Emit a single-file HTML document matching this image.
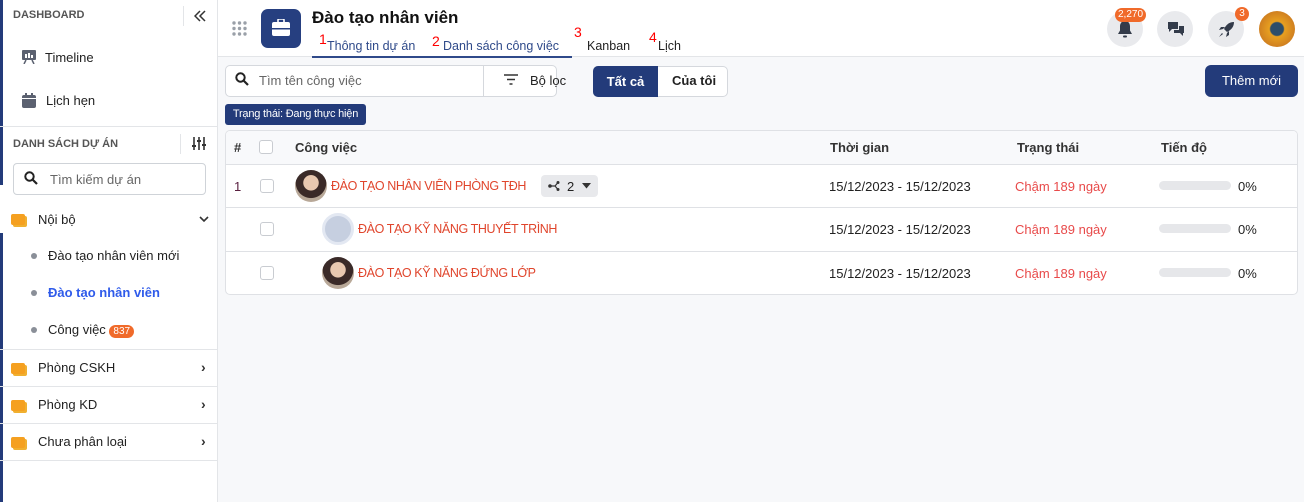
<!DOCTYPE html>
<html><head><meta charset="utf-8"><style>
*{box-sizing:border-box;margin:0;padding:0}
body{width:1304px;height:502px;overflow:hidden;font-family:"Liberation Sans","Noto Sans CJK SC",sans-serif;font-size:13px;color:#222;background:#f7f8fa;position:relative}
.abs{position:absolute}
.side{left:0;top:0;width:218px;height:502px;background:#fff;border-right:1px solid #e3e5e8}
.bar{left:0;width:3px;background:#233b7a}
.hdr{left:218px;top:0;width:1086px;height:57px;background:#fff;border-bottom:1px solid #e3e5e8}
.sec{font-size:11px;font-weight:bold;color:#555}
.item{font-size:13px;color:#222}
.hl{height:1px;background:#e3e5e8;left:0;width:217px}
.fold{width:14px;height:11px;background:#f5a020;border-radius:2px;box-shadow:2px 2px 0 #f0b030}
.dot{width:6px;height:6px;border-radius:50%;background:#8a8f98}
.chev{font-size:14px;color:#333;font-weight:bold}
.circ{width:36px;height:36px;border-radius:50%;background:#e9eaed}
.badge{background:#f06a2a;color:#fff;border-radius:8px;font-size:10px;padding:1px 4px;line-height:12px}
.th{font-weight:bold;color:#333;font-size:13px}
.task{color:#e0452c;font-size:12.5px;letter-spacing:-0.4px}
.red{color:#e84a4a}
.prog{width:72px;height:9px;border-radius:5px;background:#e6e7ea}
.cb{width:14px;height:14px;border:1px solid #c9ccd1;border-radius:3px;background:#fff}
.av{width:32px;height:32px;border-radius:50%;background:radial-gradient(circle at 50% 40%,#e8c8b0 0 30%,#3a2a28 32% 60%,#b8a898 62%)}
.tab{font-size:12.5px}
</style></head><body>
<div class="abs side"></div>
<div class="abs bar" style="top:0;height:185px"></div>
<div class="abs bar" style="top:233px;height:269px"></div>
<div class="abs sec" style="left:13px;top:9px">DASHBOARD</div>
<div class="abs" style="left:183px;top:6px;width:1px;height:20px;background:#e3e5e8"></div>
<svg class="abs" style="left:194px;top:10px" width="12" height="12" viewBox="0 0 12 12"><path d="M6 1L1 6l5 5M11 1L6 6l5 5" fill="none" stroke="#333" stroke-width="1.5"/></svg>
<svg class="abs" style="left:22px;top:50px" width="14" height="14" viewBox="0 0 14 14"><rect x="0" y="0" width="14" height="10" rx="1" fill="#5b6170"/><rect x="3" y="4" width="2" height="4" fill="#fff"/><rect x="6" y="3" width="2" height="5" fill="#fff"/><rect x="9" y="5" width="2" height="3" fill="#fff"/><path d="M4 10l-2 4M10 10l2 4" stroke="#5b6170" stroke-width="1.5"/></svg>
<div class="abs item" style="left:45px;top:50px">Timeline</div>
<svg class="abs" style="left:22px;top:93px" width="14" height="15" viewBox="0 0 14 15"><rect x="0" y="2" width="14" height="13" rx="2" fill="#5b6170"/><rect x="3" y="0" width="2" height="3" fill="#5b6170"/><rect x="9" y="0" width="2" height="3" fill="#5b6170"/><rect x="0" y="5" width="14" height="1" fill="#fff"/></svg>
<div class="abs item" style="left:46px;top:93px">Lịch hẹn</div>
<div class="abs hl" style="top:126px"></div>
<div class="abs sec" style="left:13px;top:138px">DANH SÁCH DỰ ÁN</div>
<div class="abs" style="left:180px;top:134px;width:1px;height:20px;background:#e3e5e8"></div>
<svg class="abs" style="left:192px;top:137px" width="14" height="13" viewBox="0 0 14 13"><path d="M2 0v13M7 0v13M12 0v13" stroke="#333" stroke-width="1.6"/><path d="M0 9h4M5 4h4M10 8h4" stroke="#333" stroke-width="2"/></svg>
<div class="abs" style="left:13px;top:163px;width:193px;height:32px;border:1px solid #cfd3d8;border-radius:4px;background:#fff"></div>
<svg class="abs" style="left:24px;top:171px" width="14" height="14" viewBox="0 0 14 14"><circle cx="5.5" cy="5.5" r="4.2" fill="none" stroke="#222" stroke-width="2"/><path d="M8.5 8.5l4.5 4.5" stroke="#222" stroke-width="2.2"/></svg>
<div class="abs" style="left:50px;top:172px;color:#666">Tìm kiếm dự án</div>
<div class="abs fold" style="left:11px;top:214px"></div>
<div class="abs item" style="left:38px;top:212px">Nội bộ</div>
<svg class="abs" style="left:199px;top:216px" width="10" height="7"><path d="M1 1l4 4 4-4" fill="none" stroke="#333" stroke-width="1.6"/></svg>
<div class="abs dot" style="left:31px;top:253px"></div>
<div class="abs item" style="left:48px;top:248px">Đào tạo nhân viên mới</div>
<div class="abs dot" style="left:31px;top:290px"></div>
<div class="abs item" style="left:48px;top:285px;color:#2f5bea;font-weight:bold">Đào tạo nhân viên</div>
<div class="abs dot" style="left:31px;top:327px"></div>
<div class="abs item" style="left:48px;top:322px">Công việc <span class="badge">837</span></div>
<div class="abs hl" style="top:349px"></div>
<div class="abs fold" style="left:11px;top:363px"></div>
<div class="abs item" style="left:38px;top:360px">Phòng CSKH</div>
<div class="abs chev" style="left:201px;top:359px">›</div>
<div class="abs hl" style="top:386px"></div>
<div class="abs fold" style="left:11px;top:400px"></div>
<div class="abs item" style="left:38px;top:397px">Phòng KD</div>
<div class="abs chev" style="left:201px;top:396px">›</div>
<div class="abs hl" style="top:423px"></div>
<div class="abs fold" style="left:11px;top:437px"></div>
<div class="abs item" style="left:38px;top:434px">Chưa phân loại</div>
<div class="abs chev" style="left:201px;top:433px">›</div>
<div class="abs hl" style="top:460px"></div>

<div class="abs hdr"></div>
<svg class="abs" style="left:232px;top:21px" width="15" height="15"><g fill="#9aa0a8"><circle cx="2" cy="2" r="1.7"/><circle cx="7.5" cy="2" r="1.7"/><circle cx="13" cy="2" r="1.7"/><circle cx="2" cy="7.5" r="1.7"/><circle cx="7.5" cy="7.5" r="1.7"/><circle cx="13" cy="7.5" r="1.7"/><circle cx="2" cy="13" r="1.7"/><circle cx="7.5" cy="13" r="1.7"/><circle cx="13" cy="13" r="1.7"/></g></svg>
<div class="abs" style="left:261px;top:9px;width:40px;height:39px;border-radius:7px;background:#263f80"></div>
<svg class="abs" style="left:272px;top:19px" width="18" height="17" viewBox="0 0 18 17"><rect x="6" y="0" width="6" height="4" rx="1" fill="none" stroke="#fff" stroke-width="1.6"/><rect x="0" y="3" width="18" height="14" rx="2" fill="#fff"/><rect x="0" y="9" width="18" height="1.5" fill="#263f80"/></svg>
<div class="abs" style="left:312px;top:8px;font-size:17px;font-weight:bold;color:#111">Đào tạo nhân viên</div>
<div class="abs" style="left:319px;top:31px;color:#f00;font-size:14px">1</div>
<div class="abs tab" style="left:327px;top:39px;color:#2f4a8a">Thông tin dự án</div>
<div class="abs" style="left:432px;top:33px;color:#f00;font-size:14px">2</div>
<div class="abs tab" style="left:443px;top:39px;color:#2f4a8a">Danh sách công việc</div>
<div class="abs" style="left:312px;top:56px;width:260px;height:1.5px;background:#2f4a8a"></div>
<div class="abs" style="left:574px;top:24px;color:#f00;font-size:14px">3</div>
<div class="abs tab" style="left:587px;top:39px">Kanban</div>
<div class="abs" style="left:649px;top:29px;color:#f00;font-size:14px">4</div>
<div class="abs tab" style="left:658px;top:39px">Lịch</div>

<div class="abs circ" style="left:1107px;top:11px"></div>
<svg class="abs" style="left:1117px;top:20px" width="16" height="19" viewBox="0 0 16 19"><path d="M8 1c-3.5 0-5 2.5-5 5.5v4L1 14h14l-2-3.5v-4C13 3.5 11.5 1 8 1z" fill="#333b4a"/><rect x="6" y="15.5" width="4" height="2" rx="1" fill="#333b4a"/></svg>
<div class="abs badge" style="left:1115px;top:8px;font-size:10px;padding:1px 3px">2,270</div>
<div class="abs circ" style="left:1157px;top:11px"></div>
<svg class="abs" style="left:1167px;top:21px" width="18" height="17" viewBox="0 0 18 17"><path d="M1 1h10v7H5l-3 3V8H1z" fill="#333b4a"/><path d="M12 5h5v7h-1v3l-3-3H7V9h5z" fill="#333b4a"/></svg>
<div class="abs circ" style="left:1208px;top:11px"></div>
<svg class="abs" style="left:1218px;top:21px" width="17" height="17" viewBox="0 0 17 17"><path d="M16 1c-5 0-8 3-10 7l3 3c4-2 7-5 7-10z" fill="#333b4a"/><path d="M5 8L1 9l2-3h4zM9 12l-1 4 3-2v-4z" fill="#333b4a"/><path d="M4 12l-3 4 4-3z" fill="#333b4a"/></svg>
<div class="abs badge" style="left:1235px;top:7px;width:14px;height:14px;padding:0;text-align:center;line-height:14px">3</div>
<div class="abs" style="left:1259px;top:11px;width:36px;height:36px;border-radius:50%;background:radial-gradient(circle,#2c4d6a 0 25%,#e8a020 30%,#d08020 70%,#f2b030)"></div>

<div class="abs" style="left:225px;top:65px;width:332px;height:32px;border:1px solid #d5d8dd;border-radius:5px;background:#fff"></div>
<div class="abs" style="left:483px;top:66px;width:1px;height:30px;background:#d5d8dd"></div>
<svg class="abs" style="left:235px;top:72px" width="14" height="14" viewBox="0 0 14 14"><circle cx="5.5" cy="5.5" r="4.2" fill="none" stroke="#222" stroke-width="2"/><path d="M8.5 8.5l4.5 4.5" stroke="#222" stroke-width="2.2"/></svg>
<div class="abs" style="left:259px;top:73px;color:#666">Tìm tên công việc</div>
<svg class="abs" style="left:504px;top:74px" width="14" height="11"><path d="M0 1h14M3 5.5h8M5.5 10h3" stroke="#333" stroke-width="1.6"/></svg>
<div class="abs" style="left:530px;top:73px">Bộ lọc</div>
<div class="abs" style="left:593px;top:66px;width:135px;height:31px;border:1px solid #d5d8dd;border-radius:5px;background:#fff"></div>
<div class="abs" style="left:593px;top:66px;width:65px;height:31px;border-radius:5px 0 0 5px;background:#233b7a;color:#fff;font-weight:bold;text-align:center;line-height:31px">Tất cả</div>
<div class="abs" style="left:672px;top:73px;font-weight:bold">Của tôi</div>
<div class="abs" style="left:1205px;top:65px;width:93px;height:32px;border-radius:6px;background:#233b7a;color:#fff;text-align:center;line-height:32px">Thêm mới</div>
<div class="abs" style="left:225px;top:104px;width:141px;height:21px;border-radius:3px;background:#233b7a;color:#fff;font-size:11px;text-align:center;line-height:21px;letter-spacing:-0.2px">Trạng thái: Đang thực hiện</div>

<div class="abs" style="left:225px;top:130px;width:1073px;height:165px;border:1px solid #dfe1e5;border-radius:5px;background:#fff;overflow:hidden">
<div style="height:34px;background:#f8f9fb;border-bottom:1px solid #dfe1e5"></div>
<div style="height:43px;border-bottom:1px solid #dfe1e5"></div>
<div style="height:44px;border-bottom:1px solid #dfe1e5"></div>
</div>
<div class="abs th" style="left:234px;top:140px">#</div>
<div class="abs cb" style="left:259px;top:140px"></div>
<div class="abs th" style="left:295px;top:140px">Công việc</div>
<div class="abs th" style="left:830px;top:140px">Thời gian</div>
<div class="abs th" style="left:1017px;top:140px">Trạng thái</div>
<div class="abs th" style="left:1161px;top:140px">Tiến độ</div>

<div class="abs" style="left:234px;top:179px;color:#5a2040">1</div>
<div class="abs cb" style="left:260px;top:179px"></div>
<div class="abs av" style="left:295px;top:170px"></div>
<div class="abs task" style="left:331px;top:179px">ĐÀO TẠO NHÂN VIÊN PHÒNG TĐH</div>
<div class="abs" style="left:541px;top:175px;width:57px;height:22px;border-radius:4px;background:#e8e9ec"></div>
<svg class="abs" style="left:548px;top:181px" width="12" height="10" viewBox="0 0 12 10"><circle cx="2" cy="5" r="1.8" fill="#333"/><circle cx="10" cy="1.5" r="1.5" fill="#333"/><circle cx="10" cy="8.5" r="1.5" fill="#333"/><path d="M2 5h5l3-3.5M7 5l3 3.5" fill="none" stroke="#333" stroke-width="1.2"/></svg>
<div class="abs" style="left:567px;top:179px">2</div>
<svg class="abs" style="left:582px;top:183px" width="9" height="6"><path d="M0 0h9L4.5 5.5z" fill="#333"/></svg>
<div class="abs" style="left:829px;top:179px">15/12/2023 - 15/12/2023</div>
<div class="abs red" style="left:1015px;top:179px">Chậm 189 ngày</div>
<div class="abs prog" style="left:1159px;top:181px"></div>
<div class="abs" style="left:1238px;top:179px">0%</div>

<div class="abs cb" style="left:260px;top:222px"></div>
<div class="abs" style="left:322px;top:213px;width:32px;height:32px;border-radius:50%;background:#c6cfe0;border:3px solid #e3e8f2"></div>
<div class="abs task" style="left:358px;top:222px">ĐÀO TẠO KỸ NĂNG THUYẾT TRÌNH</div>
<div class="abs" style="left:829px;top:222px">15/12/2023 - 15/12/2023</div>
<div class="abs red" style="left:1015px;top:222px">Chậm 189 ngày</div>
<div class="abs prog" style="left:1159px;top:224px"></div>
<div class="abs" style="left:1238px;top:222px">0%</div>

<div class="abs cb" style="left:260px;top:266px"></div>
<div class="abs av" style="left:322px;top:257px"></div>
<div class="abs task" style="left:358px;top:266px">ĐÀO TẠO KỸ NĂNG ĐỨNG LỚP</div>
<div class="abs" style="left:829px;top:266px">15/12/2023 - 15/12/2023</div>
<div class="abs red" style="left:1015px;top:266px">Chậm 189 ngày</div>
<div class="abs prog" style="left:1159px;top:268px"></div>
<div class="abs" style="left:1238px;top:266px">0%</div>
</body></html>
